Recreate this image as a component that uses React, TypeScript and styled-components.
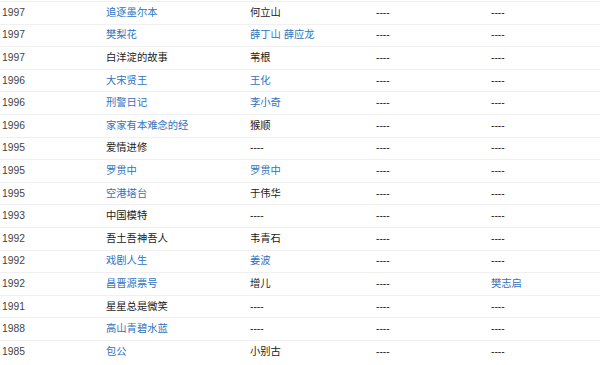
import styled, { createGlobalStyle } from 'styled-components';

type Cell = { text: string; link?: boolean };

type Work = {
  year: string;
  title: Cell;
  role: Cell;
  director: Cell;
  partner: Cell;
};

const none: Cell = { text: '----' };

const works: Work[] = [
  { year: '1997', title: { text: '追逐墨尔本', link: true }, role: { text: '何立山' }, director: none, partner: none },
  { year: '1997', title: { text: '樊梨花', link: true }, role: { text: '薛丁山 薛应龙', link: true }, director: none, partner: none },
  { year: '1997', title: { text: '白洋淀的故事' }, role: { text: '苇根' }, director: none, partner: none },
  { year: '1996', title: { text: '大宋贤王', link: true }, role: { text: '王化', link: true }, director: none, partner: none },
  { year: '1996', title: { text: '刑警日记', link: true }, role: { text: '李小奇', link: true }, director: none, partner: none },
  { year: '1996', title: { text: '家家有本难念的经', link: true }, role: { text: '猴顺' }, director: none, partner: none },
  { year: '1995', title: { text: '爱情进修' }, role: none, director: none, partner: none },
  { year: '1995', title: { text: '罗贯中', link: true }, role: { text: '罗贯中', link: true }, director: none, partner: none },
  { year: '1995', title: { text: '空港塔台', link: true }, role: { text: '于伟华' }, director: none, partner: none },
  { year: '1993', title: { text: '中国模特' }, role: none, director: none, partner: none },
  { year: '1992', title: { text: '吾土吾神吾人' }, role: { text: '韦青石' }, director: none, partner: none },
  { year: '1992', title: { text: '戏剧人生', link: true }, role: { text: '姜波', link: true }, director: none, partner: none },
  { year: '1992', title: { text: '昌晋源票号', link: true }, role: { text: '增儿' }, director: none, partner: { text: '樊志启', link: true } },
  { year: '1991', title: { text: '星星总是微笑' }, role: none, director: none, partner: none },
  { year: '1988', title: { text: '高山青碧水蓝', link: true }, role: none, director: none, partner: none },
  { year: '1985', title: { text: '包公', link: true }, role: { text: '小别古' }, director: none, partner: none },
];

const GlobalStyle = createGlobalStyle`
  html, body {
    margin: 0;
    padding: 0;
    background: #fff;
  }
  body {
    font-family: Arial, "Liberation Sans", "Noto Sans CJK SC", sans-serif;
  }
`;

const Table = styled.div`
  width: 600px;
  padding-top: 1px;
`;

const Row = styled.div`
  display: grid;
  grid-template-columns: 106px 144px 126px 115px 1fr;
  align-items: center;
  height: 21.6px;
  border-top: 1px solid #f0f0f0;
  font-size: 10.3px;
  line-height: 14px;
`;

const Year = styled.div`
  padding-left: 2px;
  color: #444;
  font-family: "Liberation Sans", Arial, sans-serif;
`;

const Text = styled.div<{ $link?: boolean }>`
  color: ${(p) => (p.$link ? '#2f73c0' : '#1a1a1a')};
  font-family: "Liberation Sans", "Noto Sans CJK SC", sans-serif;
  white-space: nowrap;
`;

function Value({ cell }: { cell: Cell }) {
  return <Text $link={cell.link}>{cell.text}</Text>;
}

export default function App() {
  return (
    <>
      <GlobalStyle />
      <Table>
        {works.map((w, i) => (
          <Row key={i}>
            <Year>{w.year}</Year>
            <Value cell={w.title} />
            <Value cell={w.role} />
            <Value cell={w.director} />
            <Value cell={w.partner} />
          </Row>
        ))}
      </Table>
    </>
  );
}
